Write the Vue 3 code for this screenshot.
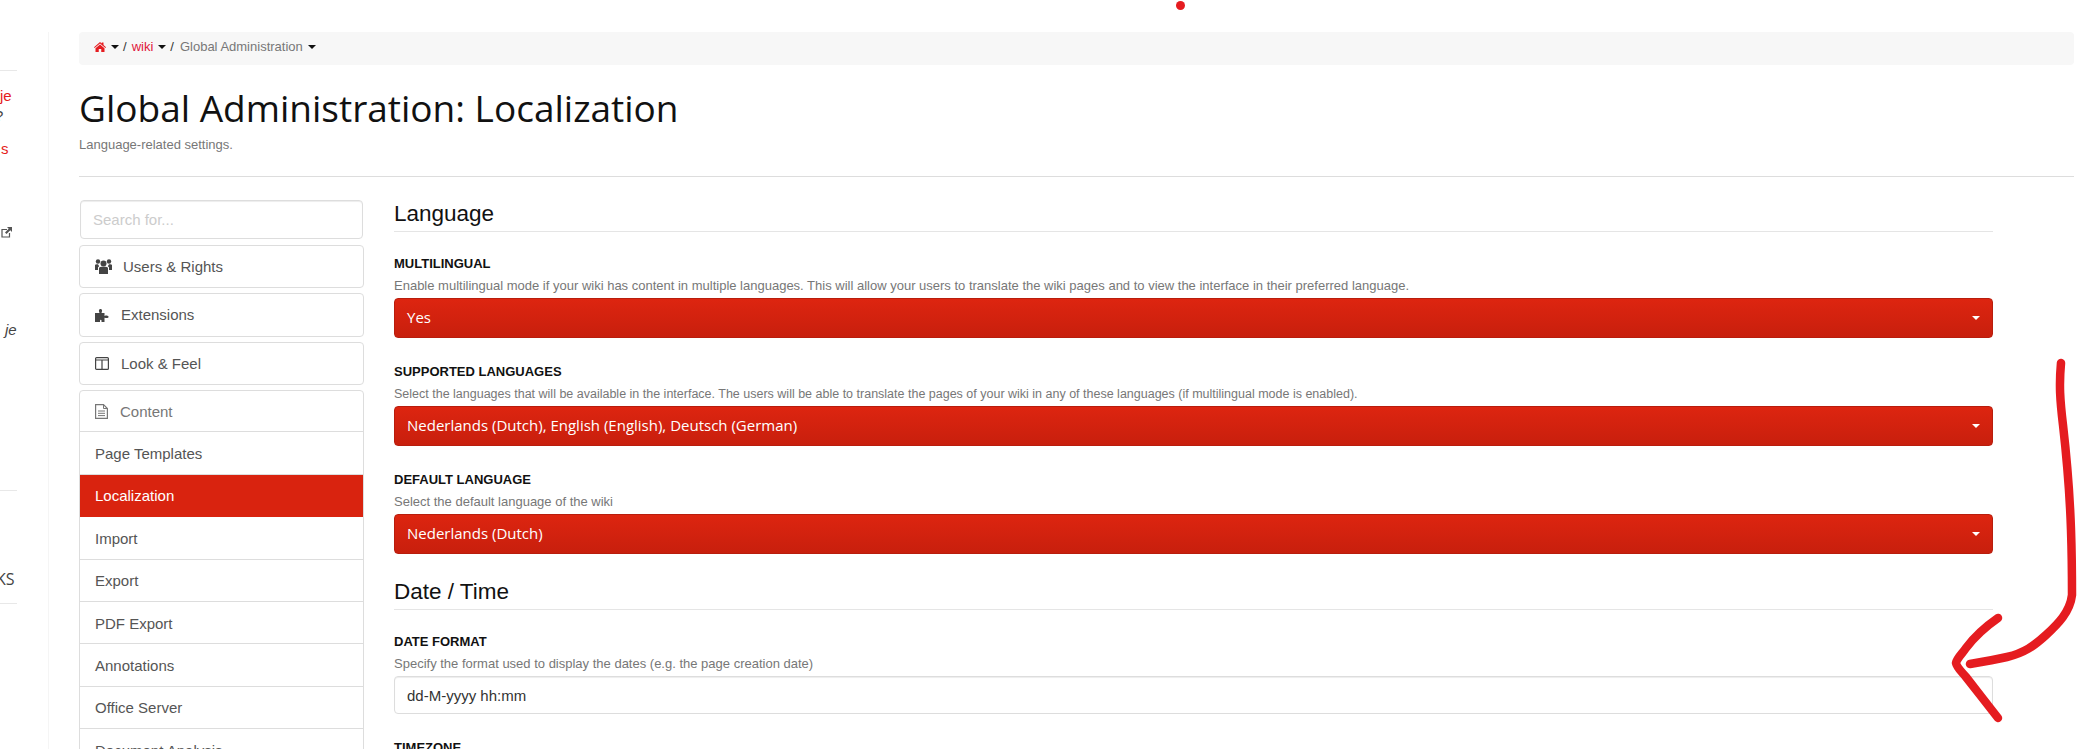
<script setup>
import { ref } from 'vue'

const menuTop = ref([
  { label: 'Users & Rights', icon: 'users' },
  { label: 'Extensions', icon: 'puzzle' },
  { label: 'Look & Feel', icon: 'layout' }
])

const contentItems = ref([
  'Page Templates',
  'Localization',
  'Import',
  'Export',
  'PDF Export',
  'Annotations',
  'Office Server',
  'Document Analysis'
])

const languageFields = ref([
  {
    label: 'Multilingual',
    help: 'Enable multilingual mode if your wiki has content in multiple languages. This will allow your users to translate the wiki pages and to view the interface in their preferred language.',
    value: 'Yes'
  },
  {
    label: 'Supported Languages',
    help: 'Select the languages that will be available in the interface. The users will be able to translate the pages of your wiki in any of these languages (if multilingual mode is enabled).',
    value: 'Nederlands (Dutch), English (English), Deutsch (German)',
    tight: true
  },
  {
    label: 'Default Language',
    help: 'Select the default language of the wiki',
    value: 'Nederlands (Dutch)'
  }
])
</script>

<template>
  <div class="page">
    <aside class="strip">
      <div class="strip-rule first"></div>
      <div class="strip-text red je">je</div>
      <div class="strip-text ask">?</div>
      <div class="strip-text red ess">s</div>
      <svg class="ext" width="11" height="11" viewBox="0 0 11 11">
        <path d="M6 2.500H1v7.500h7.500V6" fill="none" stroke="#555" stroke-width="1.200" />
        <path d="M6 0h5v5L9.300 3.300 5.500 7 4 5.500 7.700 1.700z" fill="#555" />
      </svg>
      <div class="strip-text italic">je</div>
      <div class="strip-rule second"></div>
      <div class="strip-text ks">KS</div>
      <div class="strip-rule third"></div>
    </aside>

    <main class="main">
      <nav class="crumbs">
        <svg class="home" width="12" height="10" viewBox="0 0 24 20">
          <path d="M12 0 15.500 3V1H19V6L24 10.500 22.800 12 12 3 1.200 12 0 10.500zM12 5 21 12.500V20H14.500V14H9.500V20H3V12.500z" fill="#e51c20" />
        </svg>
        <span class="caret"></span>
        <span class="sep">/</span>
        <span class="crumb-link">wiki</span>
        <span class="caret"></span>
        <span class="sep">/</span>
        <span class="crumb-current">Global Administration</span>
        <span class="caret"></span>
      </nav>

      <header class="page-head">
        <h1>Global Administration: Localization</h1>
        <p>Language-related settings.</p>
      </header>

      <div class="body-columns">
        <div class="sidebar">
          <input class="search" placeholder="Search for..." />

          <a v-for="item in menuTop" :key="item.label" class="menu-box" :class="item.icon">
            <svg v-if="item.icon === 'users'" class="menu-icon" width="17" height="15" viewBox="0 0 17 15">
              <circle cx="8.500" cy="4.500" r="3" fill="#444" />
              <circle cx="3" cy="2.500" r="2.200" fill="#444" />
              <circle cx="14" cy="2.500" r="2.200" fill="#444" />
              <path d="M4 9C4 8 5.500 7.700 8.500 7.700S13 8 13 9V15H4z" fill="#444" />
              <path d="M0 6C0 5.300 1 5.200 3 5.200L4.200 7.200 3 8.300V11H0zM17 6C17 5.300 16 5.200 14 5.200L12.800 7.200 14 8.300V11H17z" fill="#444" />
            </svg>
            <svg v-else-if="item.icon === 'puzzle'" class="menu-icon" width="14" height="14" viewBox="0 0 14 14">
              <path d="M0 5H4.500C4 3.500 3.800 3 4 2C4.400 .5 6.600 .5 7 2 7.200 3 7 3.500 6.500 5H9.500V8C11 7.400 11.500 7.400 12.500 7.800 14 8.500 14 9.500 12.500 10 11.500 10.300 11 10 9.500 9.700V14H6.500V12.500C6.500 11.500 5 11.500 5 12.500V14H0z" fill="#444" />
            </svg>
            <svg v-else class="menu-icon" width="14" height="13" viewBox="0 0 14 13">
              <rect x=".6" y=".6" width="12.800" height="11.800" rx="1" fill="none" stroke="#444" stroke-width="1.200" />
              <path d="M0 3H14M7 3V12" stroke="#444" stroke-width="1.200" />
            </svg>
            <span>{{ item.label }}</span>
          </a>

          <div class="list">
            <div class="list-head">
              <svg class="menu-icon" width="13" height="15" viewBox="0 0 13 15">
                <path d="M.6.6H8.500L12.400 4.500V14.400H.6z" fill="none" stroke="#777" stroke-width="1.200" />
                <path d="M8.500.6V4.500H12.400M3 7H10M3 9.300H10M3 11.600H10" fill="none" stroke="#777" />
              </svg>
              <span>Content</span>
            </div>
            <div
              v-for="item in contentItems"
              :key="item"
              class="list-item"
              :class="{ active: item === 'Localization' }"
            >{{ item }}</div>
          </div>
        </div>

        <section class="settings">
          <h2>Language</h2>
          <div v-for="field in languageFields" :key="field.label" class="field">
            <label>{{ field.label }}</label>
            <p class="help" :class="{ tight: field.tight }">{{ field.help }}</p>
            <button class="select">
              <span class="select-text">{{ field.value }}</span>
              <span class="select-caret"></span>
            </button>
          </div>

          <h2 class="date-title">Date / Time</h2>
          <div class="field">
            <label>Date Format</label>
            <p class="help">Specify the format used to display the dates (e.g. the page creation date)</p>
            <input class="text-input" value="dd-M-yyyy hh:mm" />
          </div>
          <div class="field">
            <label>Timezone</label>
          </div>
        </section>
      </div>
    </main>

    <!-- hand drawn annotation on top of the screenshot -->
    <span class="dot"></span>
    <svg class="scribble" width="2078" height="749" viewBox="0 0 2078 749">
      <path d="M2061 363C2059 385 2060 400 2063 425C2067 460 2070 500 2071 530C2072 560 2072 580 2072 595C2070 612 2058 624 2046 635C2034 646 2024 653 2007 657C1994 660 1982 662 1970 664" />
      <path d="M1998 618C1985 627 1975 636 1966 648C1962 654 1957 658 1956 663C1957 668 1962 672 1966 677C1977 691 1987 704 1998 718" />
    </svg>
  </div>
</template>

<style scoped>
.page {
  display: flex;
  height: 749px;
  box-sizing: border-box;
  padding-top: 32px;
  overflow: hidden;
  position: relative;
  background: #fff;
  font-family: "Liberation Sans", Arial, sans-serif;
  color: #555;
}

.strip {
  width: 49px;
  flex-shrink: 0;
  box-sizing: border-box;
  border-right: 1px solid #f5f5f5;
  display: flex;
  flex-direction: column;
  align-items: flex-start;
  height: 800px;
}

.strip-rule {
  width: 17px;
  height: 1px;
  background: #e8e8e8;
  flex-shrink: 0;
}

.strip-rule.first {
  margin-top: 38px;
}

.strip-rule.second {
  margin-top: 150px;
}

.strip-rule.third {
  margin-top: 14px;
}

.strip-text {
  font-size: 15px;
  line-height: 20px;
  height: 20px;
  color: #444;
}

.strip-text.red {
  color: #e51c20;
}

.strip-text.je {
  margin-top: 15px;
}

.strip-text.ask {
  margin-left: -5px;
}

.strip-text.ess {
  margin-top: 13px;
  margin-left: 1px;
}

.ext {
  margin-top: 68px;
  margin-left: 1px;
  flex-shrink: 0;
}

.strip-text.italic {
  margin-top: 82px;
  margin-left: 5px;
  font-style: italic;
}

.strip-text.ks {
  margin-top: 78px;
  margin-left: -4px;
  font-family: "Open Sans", sans-serif;
  font-size: 16px;
}

.main {
  margin-left: 30px;
  width: 1995px;
  flex-shrink: 0;
}

.crumbs {
  height: 33px;
  box-sizing: border-box;
  background: #f7f7f7;
  border-radius: 4px;
  padding: 0 0 4px 15px;
  display: flex;
  align-items: center;
  font-size: 13px;
  color: #777;
}

.home {
  margin-right: 5px;
}

.caret {
  width: 0;
  height: 0;
  border-left: 4px solid transparent;
  border-right: 4px solid transparent;
  border-top: 4px solid #111;
  margin-top: 1px;
}

.sep {
  margin: 0 5px 0 4px;
  color: #333;
}

.crumb-link {
  color: #e0163a;
  margin-right: 5px;
}

.crumb-current {
  margin: 0 5px 0 1px;
}

.page-head {
  height: 112px;
  box-sizing: border-box;
  border-bottom: 1px solid #ddd;
}

h1 {
  margin: 0;
  padding-top: 18px;
  font-family: "Open Sans", sans-serif;
  font-size: 37px;
  line-height: 50px;
  font-weight: 400;
  color: #111;
}

.page-head p {
  margin: 0;
  padding-top: 4px;
  font-size: 13px;
  line-height: 16px;
  color: #777;
}

.body-columns {
  display: flex;
  padding-top: 23px;
}

.sidebar {
  width: 285px;
  flex-shrink: 0;
  display: flex;
  flex-direction: column;
}

.search {
  box-sizing: border-box;
  width: 283px;
  height: 39px;
  margin: 0 0 6px 1px;
  padding: 0 12px;
  border: 1px solid #ddd;
  border-radius: 4px;
  box-shadow: inset 0 1px 1px rgba(0, 0, 0, 0.075);
  font-family: inherit;
  font-size: 15px;
  outline: none;
}

.search::placeholder {
  color: #ccc;
}

.menu-box {
  box-sizing: border-box;
  height: 43.330px;
  margin-bottom: 5px;
  padding-left: 15px;
  border: 1px solid #ddd;
  border-radius: 4px;
  display: flex;
  align-items: center;
  gap: 12px;
  font-size: 15px;
  color: #555;
}

.menu-box.users {
  gap: 11px;
}

.list {
  border: 1px solid #ddd;
  border-radius: 4px;
}

.list-head,
.list-item {
  box-sizing: border-box;
  height: 42.400px;
  display: flex;
  align-items: center;
  padding: 1px 0 0 15px;
  font-size: 15px;
  border-bottom: 1px solid #ddd;
}

.list-head {
  height: 41.400px;
  padding-top: 0;
  color: #777;
  gap: 12px;
}

.list-item.active {
  background: #d9230f;
  border-bottom-color: #d9230f;
  color: #fff;
}

.settings {
  margin-left: 30px;
  width: 1599px;
}

h2 {
  margin: 0;
  height: 31px;
  border-bottom: 1px solid #e5e5e5;
  font-size: 22.500px;
  line-height: 28px;
  font-weight: 400;
  color: #111;
}

.date-title {
  margin-top: 24px;
}

.field {
  padding-top: 24px;
}

.field + .field {
  padding-top: 26px;
}

label {
  display: block;
  font-size: 13px;
  line-height: 16px;
  font-weight: 700;
  text-transform: uppercase;
  color: #111;
}

.help {
  margin: 6px 0 4px;
  font-size: 13px;
  line-height: 16px;
  color: #777;
}

.help.tight {
  font-size: 12.500px;
}

.select {
  width: 100%;
  height: 40px;
  padding: 0 12px;
  border: 1px solid #b81d0d;
  border-radius: 4px;
  background: linear-gradient(#dd2510, #c81f0d);
  display: flex;
  align-items: center;
  justify-content: space-between;
  font-family: "Open Sans", sans-serif;
  font-size: 15px;
  color: #fff;
}

.select-text {
  margin-bottom: 2px;
}

.select-caret {
  width: 0;
  height: 0;
  border-left: 4px solid transparent;
  border-right: 4px solid transparent;
  border-top: 4px solid #fff;
}

.text-input {
  box-sizing: border-box;
  width: 100%;
  height: 38px;
  padding: 0 12px;
  border: 1px solid #ddd;
  border-radius: 4px;
  box-shadow: inset 0 1px 1px rgba(0, 0, 0, 0.075);
  font-family: inherit;
  font-size: 15px;
  color: #333;
  outline: none;
}

.dot {
  position: absolute;
  left: 1176px;
  top: 1px;
  width: 9px;
  height: 9px;
  border-radius: 50%;
  background: #e51c20;
}

.scribble {
  position: absolute;
  left: 0;
  top: 0;
  pointer-events: none;
}

.scribble path {
  fill: none;
  stroke: #e51c20;
  stroke-width: 8.500;
  stroke-linecap: round;
  stroke-linejoin: round;
}
</style>

<style>
html,
body {
  margin: 0;
  overflow: hidden;
}
</style>
